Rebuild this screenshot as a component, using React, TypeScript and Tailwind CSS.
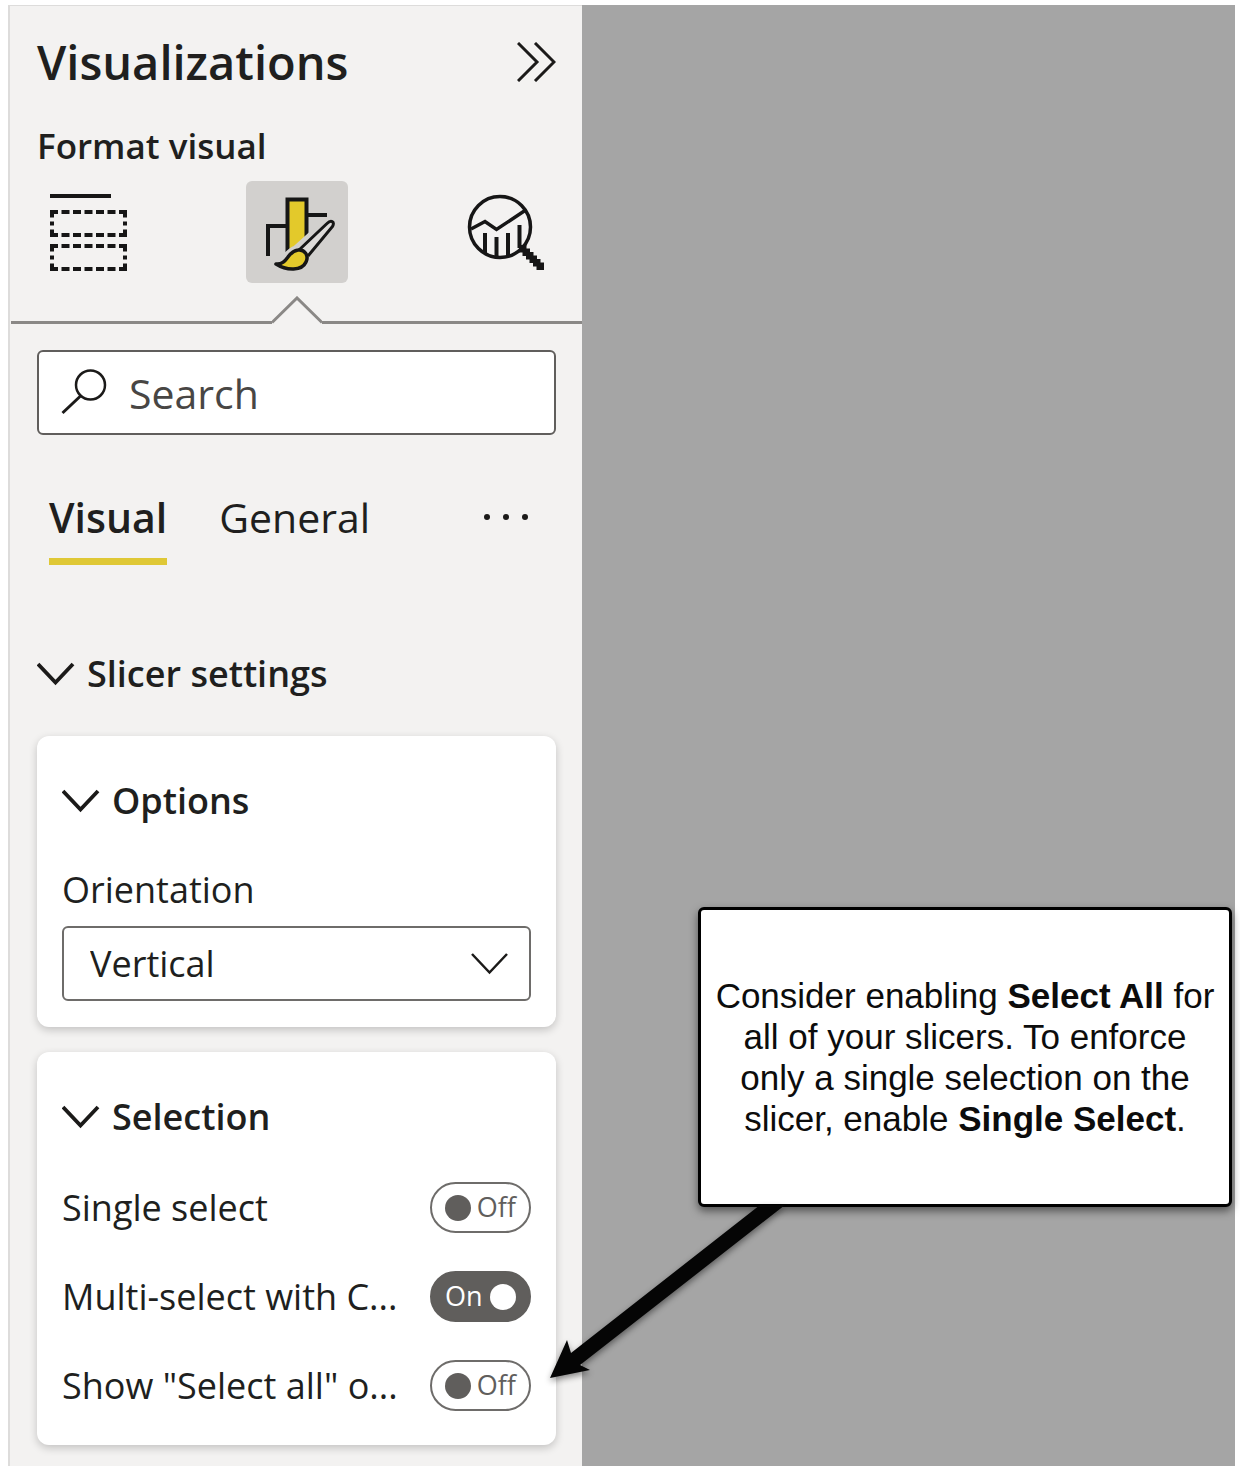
import { useState } from "react";

function Chevron({ thin = false }: { thin?: boolean }) {
  return (
    <svg className="h-6 w-[38px] shrink-0" viewBox="0 0 38 24" fill="none" aria-hidden="true">
      <path d="M1 2 18.500 20.500 36 2" stroke="#1b1a19" strokeWidth={thin ? 2.500 : 3.800} />
    </svg>
  );
}

function FieldsIcon() {
  const boxes = [16, 50];
  return (
    <svg className="size-[77px]" viewBox="0 0 77 77" fill="none" stroke="#161616" strokeWidth="4" aria-hidden="true">
      <path d="M0 2H61" />
      {boxes.map((y) => (
        <g key={y}>
          <path d={`M0 ${y + 2}H77M0 ${y + 25}H77`} strokeDasharray="8 3.500" />
          <path d={`M2 ${y}V${y + 27}M75 ${y}V${y + 27}`} strokeDasharray="7.500 4 4 4" />
        </g>
      ))}
    </svg>
  );
}

function FormatIcon() {
  return (
    <svg className="size-[102px]" viewBox="0 0 102 102" fill="none" aria-hidden="true">
      <path d="M41.500 70V18.500H60.500V60L41.500 70Z" fill="#e3c92b" />
      <path d="M41.500 71V18.500H60.500V58" stroke="#161616" strokeWidth="4" />
      <path d="M22 75V45H41M61 34H81" stroke="#161616" strokeWidth="4" />
      <path
        d="M28 83C39 83 41 72 50 69L80 42C84 38 89 41 87 46L63 76C59 88 43 92 28 83Z"
        fill="#d2d0ce"
        stroke="#d2d0ce"
        strokeWidth="9"
      />
      <path
        d="M53 69 81 42.500C85 38.500 89 40.500 86.500 45.500L62 75"
        fill="#dddbd9"
        stroke="#161616"
        strokeWidth="3"
      />
      <path
        d="M30 83C42 84 41 70 52 69C59 68 63 75 60 81C56 90 41 90 30 83Z"
        fill="#e3c92b"
        stroke="#161616"
        strokeWidth="3.500"
        strokeLinejoin="round"
      />
    </svg>
  );
}

function AnalyticsIcon() {
  const steps = [0, 1, 2, 3, 4, 5];
  return (
    <svg className="size-[77px] overflow-visible" viewBox="0 0 77 77" fill="none" stroke="#161616" strokeWidth="3.500" aria-hidden="true">
      <circle cx="33" cy="33" r="30.500" />
      <path d="M4 35 18 27.500 29.500 35.500 58 16.500" />
      <path d="M18 39V59M29.500 43V63M41 39V62M52.500 31V54" strokeWidth="4" />
      {steps.map((s) => (
        <rect key={s} x={52 + s * 3.500} y={51 + s * 3.500} width="7.500" height="7.500" fill="#161616" stroke="none" />
      ))}
    </svg>
  );
}

function Toggle({ id, label, initial }: { id: string; label: string; initial: boolean }) {
  const [on, setOn] = useState(initial);
  return (
    <div className="flex h-[51px] items-center justify-between gap-4">
      <label htmlFor={id} className="whitespace-nowrap text-[36px] leading-[48px]">
        {label}
      </label>
      <button
        id={id}
        type="button"
        role="switch"
        aria-checked={on}
        onClick={() => setOn(!on)}
        className={
          on
            ? "flex h-[51px] w-[101px] shrink-0 items-center justify-between rounded-full border-2 border-[#605e5c] bg-[#605e5c] px-[13px] text-[27px] text-white"
            : "flex h-[51px] w-[101px] shrink-0 flex-row-reverse items-center justify-between rounded-full border-2 border-[#6e6c6a] bg-white px-[13px] text-[27px] text-[#605e5c]"
        }
      >
        <span>{on ? "On" : "Off"}</span>
        <span className={on ? "size-[26px] rounded-full bg-white" : "size-[26px] rounded-full bg-[#605e5c]"} />
      </button>
    </div>
  );
}

function SectionTitle({ children }: { children: string }) {
  return (
    <button type="button" aria-expanded="true" className="flex h-12 items-center gap-3 text-[36px] font-semibold leading-[48px]">
      <Chevron />
      {children}
    </button>
  );
}

export default function App() {
  return (
    <div className="flex min-h-screen bg-white py-[5px] pl-2 pr-[5px] font-['Open_Sans','Noto_Sans',sans-serif] text-[#201f1e]">
      <aside className="w-[574px] shrink-0 border-l-2 border-t border-[#dddcdb] bg-[#f3f2f1] pb-5">
        <div className="pl-[27px] pr-[26px]">
          <header className="flex items-center justify-between pt-6">
            <h1 className="text-[47px] font-semibold leading-[64px]">Visualizations</h1>
            <button type="button" aria-label="Collapse pane">
              <svg className="h-10 w-[39px]" viewBox="0 0 39 40" fill="none" stroke="#1b1a19" strokeWidth="3" aria-hidden="true">
                <path d="M1 1 20 20 1 39M18 1 37 20 18 39" />
              </svg>
            </button>
          </header>
          <h2 className="mt-7 text-[35px] font-semibold leading-[48px]">Format visual</h2>
          <nav aria-label="Pane sections" className="mt-[11px] flex justify-between">
            <button type="button" aria-label="Build visual" className="flex size-[102px] items-center justify-center">
              <FieldsIcon />
            </button>
            <button type="button" aria-label="Format visual" className="size-[102px] rounded-md bg-[#d2d0ce]">
              <FormatIcon />
            </button>
            <button type="button" aria-label="Analytics" className="flex size-[102px] items-center justify-center">
              <AnalyticsIcon />
            </button>
          </nav>
        </div>

        <div className="mt-[13px] flex items-end pl-px">
          <div className="h-[3px] flex-1 bg-[#8a8886]" />
          <svg className="h-7 w-[50px]" viewBox="0 0 50 28" fill="none" aria-hidden="true">
            <path d="M0 26.500 25 2 50 26.500" stroke="#8a8886" strokeWidth="3" />
          </svg>
          <div className="h-[3px] flex-1 bg-[#8a8886]" />
        </div>

        <div className="pl-[27px] pr-[26px]">
          <div className="mt-[26px] flex h-[85px] items-center gap-[22px] rounded-md border-2 border-[#605e5c] bg-white px-[22px]">
            <svg className="h-[46px] w-[46px] shrink-0 overflow-visible" viewBox="0 0 46 46" fill="none" stroke="#1b1a19" strokeWidth="2.500" aria-hidden="true">
              <circle cx="29.500" cy="15" r="14.500" />
              <path d="M19.500 26 1.500 43" strokeWidth="3" />
            </svg>
            <input
              type="search"
              aria-label="Search"
              placeholder="Search"
              className="min-w-0 flex-1 bg-transparent text-[41px] leading-[56px] outline-none placeholder:text-[#484644] placeholder:opacity-100"
            />
          </div>

          <div role="tablist" className="mt-[52px] flex items-start pl-3">
            <button type="button" role="tab" aria-selected="true" className="border-b-[7px] border-[#dfc836] pb-[11px] text-[41px] font-semibold leading-[60px]">
              Visual
            </button>
            <button type="button" role="tab" aria-selected="false" className="ml-[52px] text-[41px] leading-[60px]">
              General
            </button>
            <button type="button" aria-label="More options" className="ml-auto mr-7 flex h-[60px] items-center gap-[13px]">
              <span className="size-[6px] rounded-full bg-[#1b1a19]" />
              <span className="size-[6px] rounded-full bg-[#1b1a19]" />
              <span className="size-[6px] rounded-full bg-[#1b1a19]" />
            </button>
          </div>

          <div className="mt-[85px]">
            <SectionTitle>Slicer settings</SectionTitle>
          </div>

          <section className="mt-[38px] rounded-xl bg-white px-[25px] pb-[26px] pt-[41px] shadow-[0_3px_8px_rgba(0,0,0,0.2)]">
            <SectionTitle>Options</SectionTitle>
            <label htmlFor="orientation" className="mt-[41px] block text-[36px] leading-[48px]">
              Orientation
            </label>
            <div className="mt-3 grid items-center">
              <select
                id="orientation"
                className="col-start-1 row-start-1 h-[75px] w-full appearance-none rounded-md border-2 border-[#6e6c6a] bg-white px-[26px] text-[36px]"
              >
                <option>Vertical</option>
                <option>Horizontal</option>
              </select>
              <span className="pointer-events-none col-start-1 row-start-1 mr-[22px] justify-self-end">
                <Chevron thin />
              </span>
            </div>
          </section>

          <section className="mt-[25px] rounded-xl bg-white px-[25px] pb-[34px] pt-[41px] shadow-[0_3px_8px_rgba(0,0,0,0.2)]">
            <SectionTitle>Selection</SectionTitle>
            <div className="mt-[41px] flex flex-col gap-[38px]">
              <Toggle id="single-select" label="Single select" initial={false} />
              <Toggle id="multi-select" label="Multi-select with C..." initial={true} />
              <Toggle id="select-all" label={'Show "Select all" o...'} initial={false} />
            </div>
          </section>
        </div>
      </aside>

      <main className="min-w-0 flex-1 bg-[#a5a5a5] pl-[116px] pr-[3px] pt-[902px]">
        <div className="relative flex h-[300px] items-center justify-center rounded-md border-[3px] border-black bg-white px-2 shadow-[0_4px_8px_rgba(0,0,0,0.5)]">
          <p className="text-center font-['Liberation_Sans',Arial,sans-serif] text-[35px] leading-[41px] text-[#0c0c0c]">
            Consider enabling <strong>Select All</strong> for all of your slicers. To enforce only a single selection on
            the slicer, enable <strong>Single Select</strong>.
          </p>
          <svg
            className="absolute -left-[152px] top-full h-[180px] w-[236px] overflow-visible drop-shadow-[0_3px_3px_rgba(0,0,0,0.45)]"
            viewBox="0 0 236 180"
            aria-hidden="true"
          >
            <path d="M1 174 18 136 22 149 211 1H236L31 161 41 166Z" fill="#050505" />
          </svg>
        </div>
      </main>
    </div>
  );
}
